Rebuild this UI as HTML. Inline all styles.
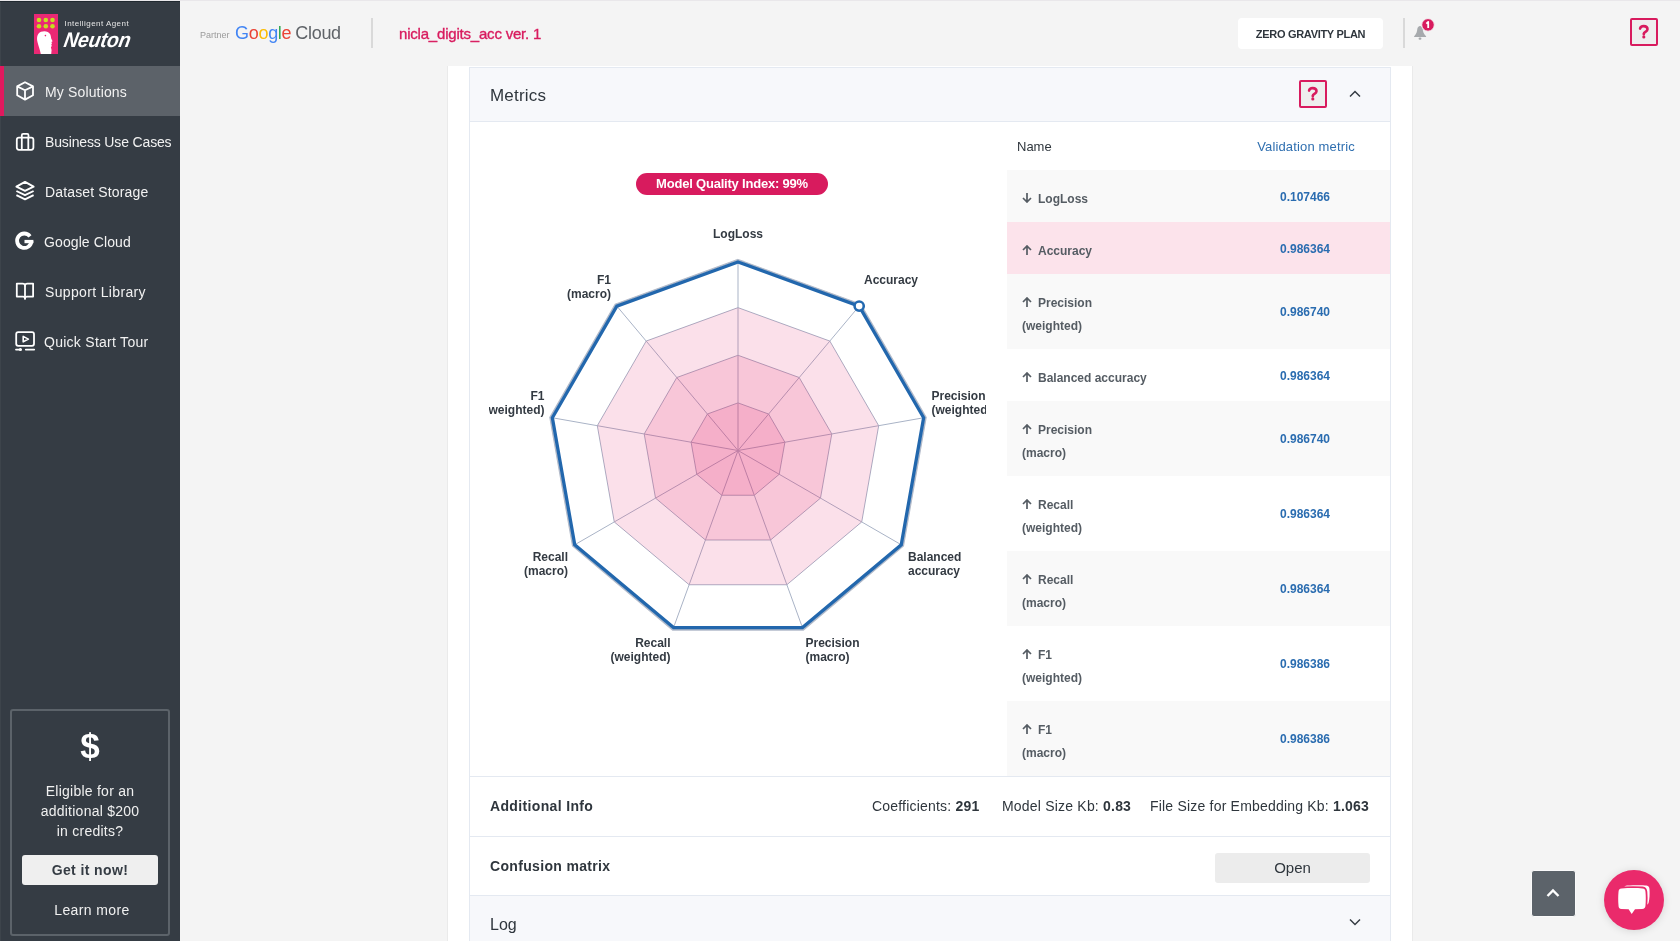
<!DOCTYPE html>
<html><head><meta charset="utf-8">
<style>
*{box-sizing:border-box;margin:0;padding:0}
html,body{width:1680px;height:941px;overflow:hidden;background:#f4f4f4;font-family:"Liberation Sans",sans-serif;position:relative}
.a,.t{will-change:transform}
.a{position:absolute;white-space:nowrap;line-height:1}
#topline{position:absolute;left:0;top:0;width:1680px;height:1px;background:#e9e7ea}
#sb{position:absolute;left:0;top:1px;width:180px;height:940px;background:#353c44}
.mi{position:absolute;left:0;width:180px;height:50px}
.mi.act{background:#5c6269}
.mi.act:before{content:"";position:absolute;left:0;top:0;width:4px;height:50px;background:#e0195e}
.mi svg{position:absolute;left:0;top:0}
.mi .t{position:absolute;left:45px;top:18.5px;font-size:14px;line-height:14px;color:#f2f2f2;white-space:nowrap}
</style></head><body>
<div id="topline"></div>
<div id="sb">
  <div style="position:absolute;left:0;top:0;width:180px;height:1px;background:#212930"></div>
  <div style="position:absolute;left:0;top:1px;width:1px;height:939px;background:#3d444b"></div>
  <!-- logo -->
  <svg class="a" style="left:0;top:-1px" width="180" height="66">
    <rect x="34" y="14" width="24" height="40" fill="#ea2874"/>
    <g fill="#c5e01e">
      <circle cx="39" cy="20" r="2.3"/><circle cx="45.8" cy="20" r="2.3"/><circle cx="52.5" cy="20" r="2.3"/>
      <circle cx="39" cy="26.2" r="2.3"/><circle cx="45.8" cy="26.2" r="2.3"/><circle cx="52.5" cy="26.2" r="2.3"/>
    </g>
    <path d="M40.8 54 C40 50 38.5 46 37.6 42.5 C36.5 38 37 33.5 41 31.8 C44.5 30.5 48.5 31.2 50.2 34.2 C51 35.8 50.9 37.2 51.2 38.6 L52.6 41.2 L51.4 42 L52 43.4 L51.3 44.2 L51.8 46 L50.9 47.2 L51.6 50 L51.2 54 Z" fill="#fff"/>
    <circle cx="45.4" cy="35.6" r="0.8" fill="#ea2874"/>
    <text x="64.5" y="26.3" font-family="Liberation Sans" font-size="8" fill="#e6e6e6" letter-spacing="0.45">Intelligent Agent</text>
    <text x="63" y="47.2" font-family="Liberation Sans" font-style="italic" font-weight="bold" font-size="19.5" fill="#fff" letter-spacing="-0.1" transform="translate(63 47.2) skewX(-10) scale(1 1.08) translate(-63 -47.2)">Neuton</text>
  </svg>
  <div class="mi act" style="top:65px">
    <svg width="40" height="50" viewBox="0 0 40 50"><g fill="none" stroke="#fff" stroke-width="1.8" stroke-linejoin="round"><path d="M25 16.2 L33 20.4 L33 29.2 L25 33.6 L17.2 29.2 L17.2 20.4 Z"/><path d="M17.2 20.4 L25 24.3 L33 20.4 M25 24.3 L25 33.6"/></g></svg>
    <div class="t" style="letter-spacing:0.15px">My Solutions</div>
  </div>
  <div class="mi" style="top:115px">
    <svg width="40" height="50" viewBox="0 0 40 50"><g fill="none" stroke="#fff" stroke-width="1.8" stroke-linejoin="round"><rect x="16.8" y="21.6" width="16.6" height="12.2" rx="2.2"/><path d="M21.8 21.6 V19.2 Q21.8 17.8 23.2 17.8 H27.2 Q28.5 17.8 28.5 19.2 V21.6 M21.8 21.6 V33.8 M28.3 21.6 V33.8"/></g></svg>
    <div class="t" style="letter-spacing:-0.15px">Business Use Cases</div>
  </div>
  <div class="mi" style="top:165px">
    <svg width="40" height="50" viewBox="0 0 40 50"><g fill="none" stroke="#fff" stroke-width="1.9" stroke-linejoin="round"><path d="M25 15.9 L33.6 20.7 L25 24.9 L16.4 20.7 Z"/><path d="M16.4 25 L25 29.2 L33.6 25 M16.4 29.2 L25 33.4 L33.6 29.2"/></g></svg>
    <div class="t" style="letter-spacing:0.15px">Dataset Storage</div>
  </div>
  <div class="mi" style="top:215px">
    <svg width="40" height="50" viewBox="0 0 40 50"><path d="M30 20.3 A7.2 7.2 0 1 0 31.5 25.2" fill="none" stroke="#fff" stroke-width="3.8"/><rect x="24.5" y="23.9" width="8.9" height="3.3" fill="#fff"/></svg>
    <div class="t" style="left:44px;letter-spacing:0.1px">Google Cloud</div>
  </div>
  <div class="mi" style="top:265px">
    <svg width="40" height="50" viewBox="0 0 40 50"><g fill="none" stroke="#fff" stroke-width="1.8" stroke-linejoin="round"><path d="M16.8 17.6 H22.6 Q25 17.6 25 19.8 Q25 17.6 27.4 17.6 H33.1 V30.6 H27 Q25 30.6 25 32.6 Q25 30.6 23 30.6 H16.8 Z"/><path d="M25 19.8 V33.6"/></g></svg>
    <div class="t" style="letter-spacing:0.35px">Support Library</div>
  </div>
  <div class="mi" style="top:315px">
    <svg width="40" height="50" viewBox="0 0 40 50"><g fill="none" stroke="#fff" stroke-width="1.8" stroke-linejoin="round"><rect x="16.2" y="16.2" width="17.8" height="13.6" rx="2"/><path d="M23.2 20.4 L28.4 23.1 L23.2 25.8 Z" stroke-width="1.6"/><path d="M16 33.6 H21 M25.8 33.6 H34.2" stroke-linecap="round"/></g><circle cx="20.4" cy="33.6" r="1.5" fill="#fff"/></svg>
    <div class="t" style="left:44px;letter-spacing:0.27px">Quick Start Tour</div>
  </div>
  <!-- credits box -->
  <div style="position:absolute;left:10px;top:708px;width:160px;height:227px;border:2px solid #5c636a;border-radius:3px"></div>
  <div class="a" style="left:0;width:180px;text-align:center;top:726.6px;font-size:35px;font-weight:bold;color:#fff">$</div>
  <div class="a" style="left:0;width:180px;text-align:center;top:779.5px;font-size:14px;line-height:20px;color:#f0f0f0;white-space:normal;letter-spacing:0.25px">Eligible for an<br>additional $200<br>in credits?</div>
  <div style="position:absolute;left:22px;top:854px;width:136px;height:30px;background:#efefef;border-radius:3px"></div>
  <div class="a" style="left:22px;width:136px;text-align:center;top:862px;font-size:14px;font-weight:bold;color:#353c44;letter-spacing:0.4px">Get it now!</div>
  <div class="a" style="left:12px;width:160px;text-align:center;top:902px;font-size:14px;color:#f0f0f0;letter-spacing:0.4px">Learn more</div>
</div>

<!-- HEADER -->
<div class="a" style="left:200px;top:31px;font-size:9px;color:#9b9b9b">Partner</div>
<div class="a" style="left:235px;top:24px;font-size:18px;letter-spacing:-0.3px"><span style="color:#4285f4">G</span><span style="color:#ea4335">o</span><span style="color:#fbbc05">o</span><span style="color:#4285f4">g</span><span style="color:#34a853">l</span><span style="color:#ea4335">e</span><span style="color:#5f6368;margin-left:4px">Cloud</span></div>
<div style="position:absolute;left:371px;top:18px;width:1.5px;height:30px;background:#d9d9d9"></div>
<div class="a" style="left:399px;top:26px;font-size:15px;color:#d81b5e;letter-spacing:-0.2px;-webkit-text-stroke:0.35px #d81b5e">nicla_digits_acc ver. 1</div>
<div style="position:absolute;left:1238px;top:18px;width:145px;height:31px;background:#fff;border-radius:4px"></div>
<div class="a" style="left:1238px;width:145px;text-align:center;top:29px;font-size:11px;font-weight:bold;color:#2f363d;letter-spacing:-0.3px">ZERO GRAVITY PLAN</div>
<div style="position:absolute;left:1403px;top:18px;width:1.5px;height:30px;background:#d9d9d9"></div>
<svg class="a" style="left:1405px;top:14px" width="35" height="32" viewBox="1405 14 35 32"><path d="M1420 25.9 C1418.6 26 1417.6 27.2 1417.3 29 C1417 31.5 1416.8 33.5 1414.2 36.2 L1414 36.9 L1426.2 36.9 L1426 36.2 C1423.3 33.5 1423 31.5 1422.7 29 C1422.4 27.2 1421.4 26 1420 25.9 Z" fill="#a7aaad"/><rect x="1418.6" y="37.5" width="2.8" height="2.3" rx="1" fill="#a7aaad"/><circle cx="1428" cy="24.9" r="6.3" fill="#d81b5e" stroke="#f3f3f3" stroke-width="1"/><path d="M1426.3 23.6 L1428.2 21.9 L1428.2 28" fill="none" stroke="#fff" stroke-width="1.8" stroke-linejoin="round"/></svg>
<div style="position:absolute;left:1630px;top:18px;width:28px;height:28px;border:2px solid #d81b5e;border-radius:2px;background:#eeeeee"></div>
<svg class="a" style="left:1630px;top:18px" width="28" height="28" viewBox="0 0 28 28"><path d="M10.1 10.6 C10.4 8.9 11.8 8.1 13.7 8.1 C15.9 8.1 17.5 9.3 17.5 11.3 C17.5 13.6 14.2 14 13.8 15.6 L13.8 16.2" fill="none" stroke="#d81b5e" stroke-width="2.6" stroke-linecap="round"/><circle cx="13.8" cy="18.9" r="1.55" fill="#d81b5e"/></svg>

<!-- MAIN PANEL -->
<div style="position:absolute;left:448px;top:66px;width:964px;height:880px;background:#fff;box-shadow:-1px 0 0 #eaeaea,1px 0 0 #eaeaea"></div>
<div style="position:absolute;left:469px;top:67px;width:922px;height:880px;border:1px solid #e4e9f1;background:#fff"></div>
<div style="position:absolute;left:470px;top:68px;width:920px;height:54px;background:#f7f8fb;border-bottom:1px solid #e4e9f1"></div>
<div class="a" style="left:490px;top:86.5px;font-size:17px;color:#2f363d;letter-spacing:0.2px">Metrics</div>
<div style="position:absolute;left:1299px;top:80px;width:28px;height:28px;border:2px solid #d81b5e;border-radius:2px;background:#eeeeee"></div>
<svg class="a" style="left:1299px;top:80px" width="28" height="28" viewBox="0 0 28 28"><path d="M10.1 10.6 C10.4 8.9 11.8 8.1 13.7 8.1 C15.9 8.1 17.5 9.3 17.5 11.3 C17.5 13.6 14.2 14 13.8 15.6 L13.8 16.2" fill="none" stroke="#d81b5e" stroke-width="2.6" stroke-linecap="round"/><circle cx="13.8" cy="18.9" r="1.55" fill="#d81b5e"/></svg>
<svg class="a" style="left:1348px;top:89px" width="14" height="10"><path d="M2 7.5 L7 2.5 L12 7.5" fill="none" stroke="#353c44" stroke-width="1.5"/></svg>
<!--CHART-->
<svg class="a" style="left:489px;top:122px" width="497" height="654" viewBox="489 122 497 654">
<g stroke="#a9b3c6" stroke-width="1"><polygon points="738.00,402.88 768.61,414.02 784.90,442.23 779.24,474.31 754.29,495.25 721.71,495.25 696.76,474.31 691.10,442.23 707.39,414.02" fill="none"/><polygon points="738.00,355.25 799.23,377.53 831.80,433.96 820.49,498.12 770.58,540.01 705.42,540.01 655.51,498.12 644.20,433.96 676.77,377.53" fill="none"/><polygon points="738.00,307.62 829.84,341.05 878.70,425.69 861.73,521.94 786.87,584.76 689.13,584.76 614.27,521.94 597.30,425.69 646.16,341.05" fill="none"/><polygon points="738.00,260.00 860.45,304.57 925.61,417.42 902.98,545.75 803.15,629.51 672.85,629.51 573.02,545.75 550.39,417.42 615.55,304.57" fill="none"/><line x1="738" y1="450.5" x2="738.00" y2="260.00"/><line x1="738" y1="450.5" x2="860.45" y2="304.57"/><line x1="738" y1="450.5" x2="925.61" y2="417.42"/><line x1="738" y1="450.5" x2="902.98" y2="545.75"/><line x1="738" y1="450.5" x2="803.15" y2="629.51"/><line x1="738" y1="450.5" x2="672.85" y2="629.51"/><line x1="738" y1="450.5" x2="573.02" y2="545.75"/><line x1="738" y1="450.5" x2="550.39" y2="417.42"/><line x1="738" y1="450.5" x2="615.55" y2="304.57"/></g>
<polygon points="738.00,307.62 829.84,341.05 878.70,425.69 861.73,521.94 786.87,584.76 689.13,584.76 614.27,521.94 597.30,425.69 646.16,341.05" fill="rgb(228,38,105)" fill-opacity="0.14"/>
<polygon points="738.00,355.25 799.23,377.53 831.80,433.96 820.49,498.12 770.58,540.01 705.42,540.01 655.51,498.12 644.20,433.96 676.77,377.53" fill="rgb(228,38,105)" fill-opacity="0.14"/>
<polygon points="738.00,402.88 768.61,414.02 784.90,442.23 779.24,474.31 754.29,495.25 721.71,495.25 696.76,474.31 691.10,442.23 707.39,414.02" fill="rgb(228,38,105)" fill-opacity="0.14"/>
<polygon points="738.00,259.50 860.77,304.19 926.10,417.33 903.41,546.00 803.33,629.98 672.67,629.98 572.59,546.00 549.90,417.33 615.23,304.19" fill="none" stroke="#b3bbca" stroke-width="1.3"/>
<polygon points="738.00,262.00 859.17,306.10 923.64,417.77 901.25,544.75 802.47,627.63 673.53,627.63 574.75,544.75 552.36,417.77 616.83,306.10" fill="none" stroke="#2267ad" stroke-width="3.3" stroke-linejoin="miter"/>
<circle cx="859.17" cy="306.10" r="4.6" fill="#fff" stroke="#2369b0" stroke-width="2.6"/>
<g font-family="Liberation Sans" font-weight="bold" font-size="12" fill="#333a42"><text x="738" y="238" text-anchor="middle">LogLoss</text><text x="864" y="283.5" text-anchor="start">Accuracy</text><text x="931.5" y="400" text-anchor="start">Precision</text><text x="931.5" y="414" text-anchor="start">(weighted)</text><text x="908" y="561.3" text-anchor="start">Balanced</text><text x="908" y="575.3" text-anchor="start">accuracy</text><text x="805.5" y="647.4" text-anchor="start">Precision</text><text x="805.5" y="661.4" text-anchor="start">(macro)</text><text x="670.5" y="647.4" text-anchor="end">Recall</text><text x="670.5" y="661.4" text-anchor="end">(weighted)</text><text x="568" y="561.3" text-anchor="end">Recall</text><text x="568" y="575.3" text-anchor="end">(macro)</text><text x="544.5" y="400" text-anchor="end">F1</text><text x="544.5" y="414" text-anchor="end">(weighted)</text><text x="611" y="283.5" text-anchor="end">F1</text><text x="611" y="297.5" text-anchor="end">(macro)</text></g>
</svg>
<div style="position:absolute;left:636px;top:173px;width:192px;height:22px;border-radius:11px;background:#d81b5e"></div>
<div class="a" style="left:636px;width:192px;text-align:center;top:177.2px;font-size:13px;font-weight:bold;color:#fff;letter-spacing:-0.2px">Model Quality Index: 99%</div>
<!--/CHART-->
<!--TABLE-->
<div class="a" style="left:1017px;top:140px;font-size:13px;color:#2f363d">Name</div>
<div class="a" style="left:1206px;width:200px;text-align:center;top:140px;font-size:13px;color:#2f6fb0;letter-spacing:0.15px">Validation metric</div>
<div style="position:absolute;left:1007px;top:170px;width:383px;height:52px;background:#f9f9f9"></div>
<svg class="a" style="left:1022px;top:193px" width="10" height="10"><path d="M5 0 V8.8 M1 5 L5 9 L9 5" fill="none" stroke="#555c63" stroke-width="1.7"/></svg>
<div class="a" style="left:1038px;top:193px;font-size:12px;font-weight:bold;color:#555c63">LogLoss</div>
<div class="a" style="left:1205.3px;width:200px;text-align:center;top:190.8px;font-size:12px;font-weight:bold;color:#2a6cb0">0.107466</div>
<div style="position:absolute;left:1007px;top:222px;width:383px;height:52px;background:#fce3eb"></div>
<svg class="a" style="left:1022px;top:245px" width="10" height="10"><path d="M5 10 V1.2 M1 5 L5 1 L9 5" fill="none" stroke="#555c63" stroke-width="1.7"/></svg>
<div class="a" style="left:1038px;top:245px;font-size:12px;font-weight:bold;color:#555c63">Accuracy</div>
<div class="a" style="left:1205.3px;width:200px;text-align:center;top:242.8px;font-size:12px;font-weight:bold;color:#2a6cb0">0.986364</div>
<div style="position:absolute;left:1007px;top:274px;width:383px;height:75px;background:#f9f9f9"></div>
<svg class="a" style="left:1022px;top:297px" width="10" height="10"><path d="M5 10 V1.2 M1 5 L5 1 L9 5" fill="none" stroke="#555c63" stroke-width="1.7"/></svg>
<div class="a" style="left:1038px;top:297px;font-size:12px;font-weight:bold;color:#555c63">Precision</div>
<div class="a" style="left:1022px;top:320px;font-size:12px;font-weight:bold;color:#555c63">(weighted)</div>
<div class="a" style="left:1205.3px;width:200px;text-align:center;top:306.3px;font-size:12px;font-weight:bold;color:#2a6cb0">0.986740</div>
<div style="position:absolute;left:1007px;top:349px;width:383px;height:52px;background:#ffffff"></div>
<svg class="a" style="left:1022px;top:372px" width="10" height="10"><path d="M5 10 V1.2 M1 5 L5 1 L9 5" fill="none" stroke="#555c63" stroke-width="1.7"/></svg>
<div class="a" style="left:1038px;top:372px;font-size:12px;font-weight:bold;color:#555c63">Balanced accuracy</div>
<div class="a" style="left:1205.3px;width:200px;text-align:center;top:369.8px;font-size:12px;font-weight:bold;color:#2a6cb0">0.986364</div>
<div style="position:absolute;left:1007px;top:401px;width:383px;height:75px;background:#f9f9f9"></div>
<svg class="a" style="left:1022px;top:424px" width="10" height="10"><path d="M5 10 V1.2 M1 5 L5 1 L9 5" fill="none" stroke="#555c63" stroke-width="1.7"/></svg>
<div class="a" style="left:1038px;top:424px;font-size:12px;font-weight:bold;color:#555c63">Precision</div>
<div class="a" style="left:1022px;top:447px;font-size:12px;font-weight:bold;color:#555c63">(macro)</div>
<div class="a" style="left:1205.3px;width:200px;text-align:center;top:433.3px;font-size:12px;font-weight:bold;color:#2a6cb0">0.986740</div>
<div style="position:absolute;left:1007px;top:476px;width:383px;height:75px;background:#ffffff"></div>
<svg class="a" style="left:1022px;top:499px" width="10" height="10"><path d="M5 10 V1.2 M1 5 L5 1 L9 5" fill="none" stroke="#555c63" stroke-width="1.7"/></svg>
<div class="a" style="left:1038px;top:499px;font-size:12px;font-weight:bold;color:#555c63">Recall</div>
<div class="a" style="left:1022px;top:522px;font-size:12px;font-weight:bold;color:#555c63">(weighted)</div>
<div class="a" style="left:1205.3px;width:200px;text-align:center;top:508.3px;font-size:12px;font-weight:bold;color:#2a6cb0">0.986364</div>
<div style="position:absolute;left:1007px;top:551px;width:383px;height:75px;background:#f9f9f9"></div>
<svg class="a" style="left:1022px;top:574px" width="10" height="10"><path d="M5 10 V1.2 M1 5 L5 1 L9 5" fill="none" stroke="#555c63" stroke-width="1.7"/></svg>
<div class="a" style="left:1038px;top:574px;font-size:12px;font-weight:bold;color:#555c63">Recall</div>
<div class="a" style="left:1022px;top:597px;font-size:12px;font-weight:bold;color:#555c63">(macro)</div>
<div class="a" style="left:1205.3px;width:200px;text-align:center;top:583.3px;font-size:12px;font-weight:bold;color:#2a6cb0">0.986364</div>
<div style="position:absolute;left:1007px;top:626px;width:383px;height:75px;background:#ffffff"></div>
<svg class="a" style="left:1022px;top:649px" width="10" height="10"><path d="M5 10 V1.2 M1 5 L5 1 L9 5" fill="none" stroke="#555c63" stroke-width="1.7"/></svg>
<div class="a" style="left:1038px;top:649px;font-size:12px;font-weight:bold;color:#555c63">F1</div>
<div class="a" style="left:1022px;top:672px;font-size:12px;font-weight:bold;color:#555c63">(weighted)</div>
<div class="a" style="left:1205.3px;width:200px;text-align:center;top:658.3px;font-size:12px;font-weight:bold;color:#2a6cb0">0.986386</div>
<div style="position:absolute;left:1007px;top:701px;width:383px;height:75px;background:#f9f9f9"></div>
<svg class="a" style="left:1022px;top:724px" width="10" height="10"><path d="M5 10 V1.2 M1 5 L5 1 L9 5" fill="none" stroke="#555c63" stroke-width="1.7"/></svg>
<div class="a" style="left:1038px;top:724px;font-size:12px;font-weight:bold;color:#555c63">F1</div>
<div class="a" style="left:1022px;top:747px;font-size:12px;font-weight:bold;color:#555c63">(macro)</div>
<div class="a" style="left:1205.3px;width:200px;text-align:center;top:733.3px;font-size:12px;font-weight:bold;color:#2a6cb0">0.986386</div>
<!--/TABLE-->
<!-- bottom sections -->
<div style="position:absolute;left:470px;top:776px;width:920px;height:1px;background:#e4e9f1"></div>
<div class="a" style="left:490px;top:799px;font-size:14px;font-weight:bold;color:#2f363d;letter-spacing:0.35px">Additional Info</div>
<div class="a" style="left:872px;top:799px;font-size:14px;color:#2f363d;letter-spacing:0.2px">Coefficients: <b>291</b></div>
<div class="a" style="left:1002px;top:799px;font-size:14px;color:#2f363d;letter-spacing:0.2px">Model Size Kb: <b>0.83</b></div>
<div class="a" style="left:1150px;top:799px;font-size:14px;color:#2f363d;letter-spacing:0.2px">File Size for Embedding Kb: <b>1.063</b></div>
<div style="position:absolute;left:470px;top:835.5px;width:920px;height:1px;background:#e4e9f1"></div>
<div class="a" style="left:490px;top:858.8px;font-size:14px;font-weight:bold;color:#2f363d;letter-spacing:0.33px">Confusion matrix</div>
<div style="position:absolute;left:1215px;top:853px;width:155px;height:30px;background:#ececec;border-radius:3px"></div>
<div class="a" style="left:1215px;width:155px;text-align:center;top:860px;font-size:15px;color:#2f363d">Open</div>
<div style="position:absolute;left:470px;top:895px;width:920px;height:50px;background:#f7f8fb;border-top:1px solid #e4e9f1"></div>
<div class="a" style="left:490px;top:916.5px;font-size:16px;color:#2f363d">Log</div>
<svg class="a" style="left:1348px;top:917px" width="14" height="10"><path d="M2 2.5 L7 7.5 L12 2.5" fill="none" stroke="#353c44" stroke-width="1.5"/></svg>

<!-- floating -->
<div style="position:absolute;left:1531px;top:870px;width:45px;height:47px;background:#5c636a;border-radius:3px;border:1px solid #fafafa"></div>
<svg class="a" style="left:1545px;top:887px" width="16" height="12"><path d="M2.5 9 L8 3.5 L13.5 9" fill="none" stroke="#fff" stroke-width="2.4"/></svg>
<div style="position:absolute;left:1604px;top:870px;width:60px;height:60px;border-radius:50%;background:#ea2a6b;box-shadow:0 1px 8px rgba(0,0,0,0.13)"></div>
<svg class="a" style="left:1604px;top:870px" width="60" height="60" viewBox="1604 870 60 60"><path d="M1627 885.6 C1635 885 1643 885 1646.5 885.6 C1648.8 886 1649.3 887 1649.5 889.5 C1649.8 894 1649.6 899 1648.6 902.8 C1648.2 904.5 1647 904.8 1645.5 904.5 L1645 890 C1644.5 887.5 1640 887 1624.2 887.2 C1624.8 886.2 1625.5 885.8 1627 885.6 Z" fill="#fff"/><path d="M1621.5 888.4 C1630 887.8 1637 887.8 1642.5 888.4 C1644.8 888.7 1645.3 889.6 1645.5 892 C1645.9 896 1645.9 901 1645.5 905.5 C1645.3 908 1644.5 908.8 1642 909 L1635 909.3 L1631.7 914 L1628.6 909.3 L1621.5 909 C1619.2 908.8 1618.6 908 1618.5 905.5 C1618.1 901 1618.1 896 1618.5 892 C1618.7 889.6 1619.3 888.7 1621.5 888.4 Z" fill="#fff" stroke="#ea2a6b" stroke-width="3.6" paint-order="stroke fill" stroke-linejoin="round"/></svg>

</body></html>
